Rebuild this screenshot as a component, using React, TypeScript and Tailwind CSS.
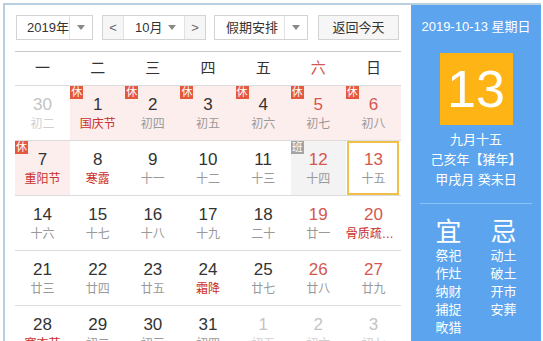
import React from 'react';

type Cell = {
  d: number;
  l: string;
  red?: boolean; // weekend number
  fest?: boolean; // lunar line in red
  gray?: boolean; // other month
  badge?: '休' | '班';
  bg?: string;
  today?: boolean;
};

const weeks: Cell[][] = [
  [
    { d: 30, l: '初二', gray: true },
    { d: 1, l: '国庆节', fest: true, badge: '休', bg: 'bg-[#fdeeee]' },
    { d: 2, l: '初四', badge: '休', bg: 'bg-[#fdeeee]' },
    { d: 3, l: '初五', badge: '休', bg: 'bg-[#fdeeee]' },
    { d: 4, l: '初六', badge: '休', bg: 'bg-[#fdeeee]' },
    { d: 5, l: '初七', red: true, badge: '休', bg: 'bg-[#fdeeee]' },
    { d: 6, l: '初八', red: true, badge: '休', bg: 'bg-[#fdeeee]' },
  ],
  [
    { d: 7, l: '重阳节', fest: true, badge: '休', bg: 'bg-[#fdeeee]' },
    { d: 8, l: '寒露', fest: true },
    { d: 9, l: '十一' },
    { d: 10, l: '十二' },
    { d: 11, l: '十三' },
    { d: 12, l: '十四', red: true, badge: '班', bg: 'bg-[#f3f3f3]' },
    { d: 13, l: '十五', red: true, today: true },
  ],
  [
    { d: 14, l: '十六' },
    { d: 15, l: '十七' },
    { d: 16, l: '十八' },
    { d: 17, l: '十九' },
    { d: 18, l: '二十' },
    { d: 19, l: '廿一', red: true },
    { d: 20, l: '骨质疏松日', red: true, fest: true },
  ],
  [
    { d: 21, l: '廿三' },
    { d: 22, l: '廿四' },
    { d: 23, l: '廿五' },
    { d: 24, l: '霜降', fest: true },
    { d: 25, l: '廿七' },
    { d: 26, l: '廿八', red: true },
    { d: 27, l: '廿九', red: true },
  ],
  [
    { d: 28, l: '寒衣节', fest: true },
    { d: 29, l: '初二' },
    { d: 30, l: '初三' },
    { d: 31, l: '初四' },
    { d: 1, l: '初五', gray: true },
    { d: 2, l: '初六', gray: true },
    { d: 3, l: '初七', gray: true },
  ],
];

const weekdays = ['一', '二', '三', '四', '五', '六', '日'];

function Caret() {
  return (
    <svg width="8" height="5" viewBox="0 0 8 5">
      <path d="M0 0h8L4 5z" fill="#888" />
    </svg>
  );
}

function DayCell({ c }: { c: Cell }) {
  const numColor = c.gray ? 'text-[#c4c4c4]' : c.red ? 'text-[#d4574f]' : 'text-[#333]';
  const lunarColor = c.gray ? 'text-[#cfcfcf]' : c.fest ? 'text-[#c9302c]' : 'text-[#999]';
  return (
    <div className={`relative h-[54px] flex flex-col items-center ${c.bg ?? ''}`}>
      {c.badge && (
        <span
          className={`absolute left-0 top-0 w-[13px] h-[13px] text-[11px] leading-[13px] text-white text-center ${
            c.badge === '休' ? 'bg-[#e4583e]' : 'bg-[#a3a3a3]'
          }`}
        >
          {c.badge}
        </span>
      )}
      {c.today && (
        <span className="absolute inset-y-[0px] left-[1px] right-[2px] border-2 border-[#f2c04a]" />
      )}
      <span className={`pt-[9px] text-[17px] leading-[20px] ${numColor}`}>{c.d}</span>
      <span className={`mt-[1px] w-full text-[12px] leading-[16px] text-center truncate ${lunarColor}`}>
        {c.l}
      </span>
    </div>
  );
}

export default function App() {
  return (
    <div
      className="w-[543px] h-[341px] overflow-hidden bg-white"
      style={{ fontFamily: '"Liberation Sans", "Noto Sans CJK SC", sans-serif' }}
    >
      <div className="ml-[3px] mt-[3px] w-[538px] h-[340px] border-l-2 border-t-2 border-[#b7cfdf] flex">
        {/* 左侧日历 */}
        <div className="w-[406px] px-[10px] pt-[10px]">
          <div className="flex items-center pb-[11px] border-b border-[#c9c9c9] text-[13px] text-[#333]">
            <div className="ml-[1px] w-[77px] h-[25px] border border-[#d3d3d3] flex items-center">
              <span className="flex-1 pl-[10px]">2019年</span>
              <span className="w-[23px] h-full border-l border-[#e2e2e2] flex items-center justify-center">
                <Caret />
              </span>
            </div>
            <div className="ml-[9px] w-[104px] h-[25px] border border-[#d3d3d3] flex items-center">
              <span className="w-[21px] h-full bg-[#f6f6f6] border-r border-[#e2e2e2] flex items-center justify-center text-[#666]">
                &lt;
              </span>
              <span className="flex-1 pl-[11px]">10月</span>
              <span className="w-[16px] flex items-center">
                <Caret />
              </span>
              <span className="w-[21px] h-full bg-[#f6f6f6] border-l border-[#e2e2e2] flex items-center justify-center text-[#666]">
                &gt;
              </span>
            </div>
            <div className="ml-[8px] w-[94px] h-[25px] border border-[#d3d3d3] flex items-center">
              <span className="flex-1 pl-[11px]">假期安排</span>
              <span className="w-[23px] h-full border-l border-[#e2e2e2] flex items-center justify-center">
                <Caret />
              </span>
            </div>
            <div className="ml-[10px] w-[81px] h-[25px] border border-[#d3d3d3] bg-[#f6f6f6] flex items-center justify-center">
              返回今天
            </div>
          </div>

          <div className="grid grid-cols-7 h-[33px] items-center text-[15px] text-center">
            {weekdays.map((w) => (
              <span key={w} className={w === '六' ? 'text-[#d4574f]' : 'text-[#333]'}>
                {w}
              </span>
            ))}
          </div>

          {weeks.map((row, i) => (
            <div key={i} className="grid grid-cols-7 border-t border-[#dcdcdc]">
              {row.map((c, j) => (
                <DayCell key={j} c={c} />
              ))}
            </div>
          ))}
        </div>

        {/* 右侧详情 */}
        <div className="w-[130px] bg-[#5ca5ee] text-white flex flex-col items-center pt-[13px]">
          <div className="text-[13px] leading-[18px]">2019-10-13 星期日</div>
          <div className="mt-[17px] w-[73px] h-[72px] bg-[#fdb414] flex items-center justify-center text-[52px] leading-none">
            13
          </div>
          <div className="mt-[5px] text-[13px] leading-[20px] text-center">
            <div>九月十五</div>
            <div>己亥年【猪年】</div>
            <div>甲戌月 癸未日</div>
          </div>
          <div className="mt-[13px] w-[112px] border-t border-[#8cc2f5]" />
          <div className="mt-[13px] flex gap-[29px]">
            <div className="flex flex-col items-center">
              <span className="text-[26px] leading-[30px]">宜</span>
              <div className="text-[13px] leading-[18px] text-center">
                <div>祭祀</div>
                <div>作灶</div>
                <div>纳财</div>
                <div>捕捉</div>
                <div>畋猎</div>
              </div>
            </div>
            <div className="flex flex-col items-center">
              <span className="text-[26px] leading-[30px]">忌</span>
              <div className="text-[13px] leading-[18px] text-center">
                <div>动土</div>
                <div>破土</div>
                <div>开市</div>
                <div>安葬</div>
              </div>
            </div>
          </div>
        </div>
      </div>
    </div>
  );
}
